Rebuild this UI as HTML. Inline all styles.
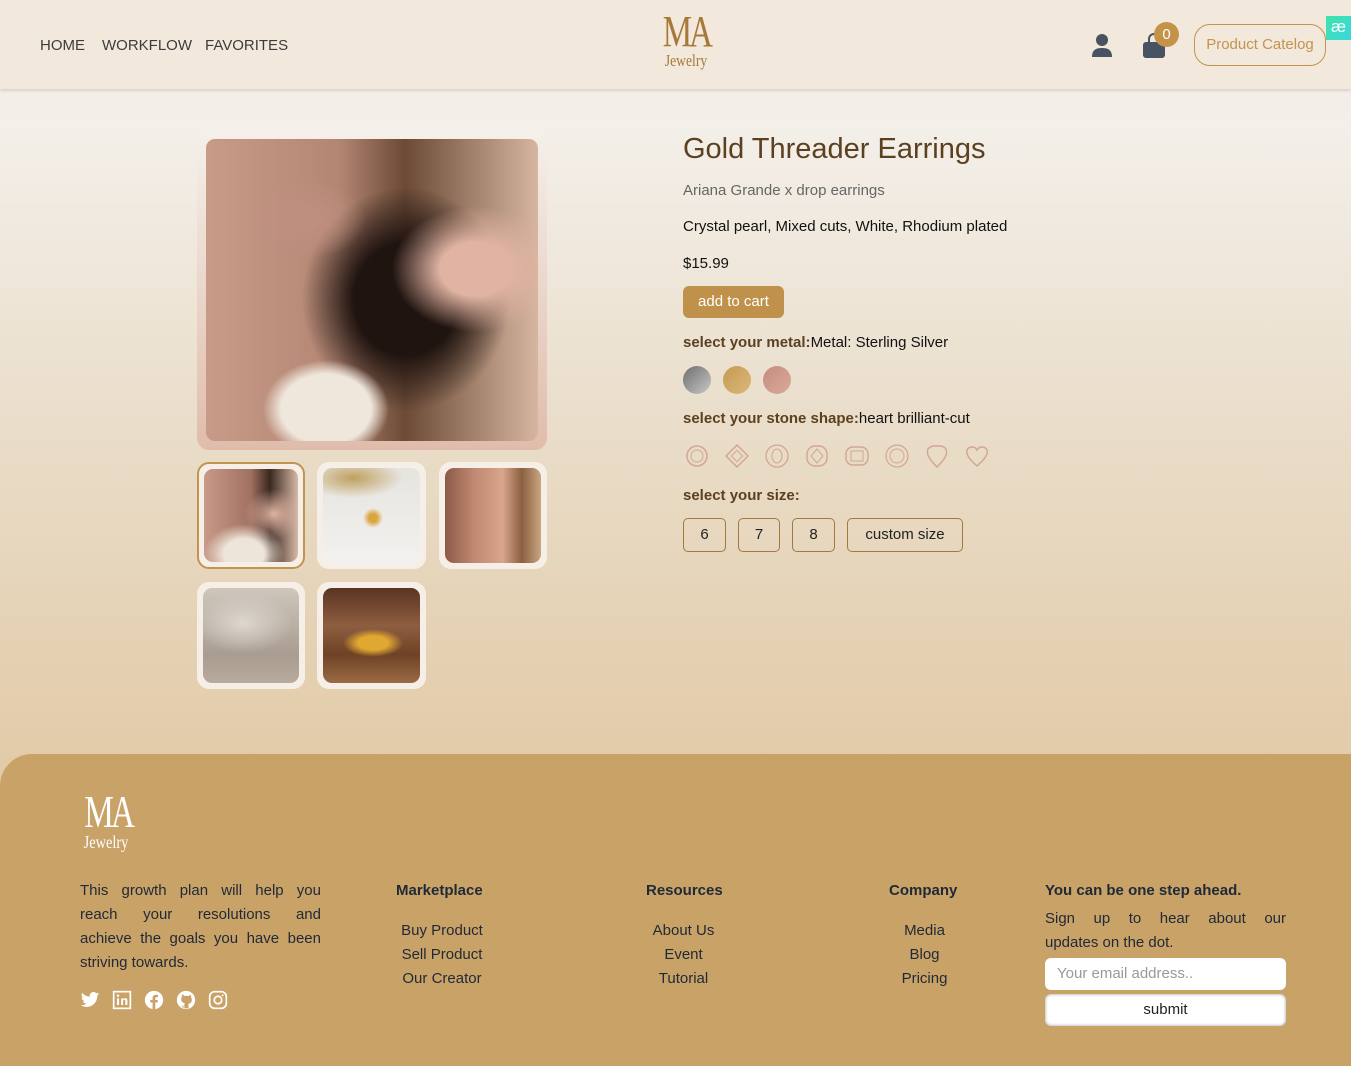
<!DOCTYPE html>
<html><head><meta charset="utf-8">
<style>
*{box-sizing:border-box;margin:0;padding:0}
body{width:1351px;height:1066px;overflow:hidden;font-family:"Liberation Sans",sans-serif;background:linear-gradient(#f3efe8 90px,#f3efe9 130px,#e9dcc7 450px,#e2cba8 760px);position:relative;color:#111}
.abs{position:absolute}
header{position:absolute;left:0;top:0;width:1351px;height:89px;background:#f2e8db;box-shadow:0 2px 3px rgba(0,0,0,.12)}
nav a{position:absolute;top:37px;font-size:15px;color:#3c3c3c;text-decoration:none}
.logo{font-family:"Liberation Serif",serif;color:#a6793a;text-align:center}
.pc{position:absolute;left:1194px;top:24px;width:132px;height:42px;border:1px solid #c39350;border-radius:16px;color:#c39350;font-size:15px;line-height:40px;text-align:center}
.ae{position:absolute;left:1326px;top:16px;width:25px;height:24px;background:linear-gradient(135deg,#3fe3a7,#3bd6e0);color:#fff;font-size:17px;text-align:center;line-height:22px}
.frame{position:absolute;border-radius:12px;padding:6px}
.img{width:100%;height:100%;border-radius:9px}
.t{position:absolute;font-size:15px}
.sw{position:absolute;top:366px;width:28px;height:28px;border-radius:50%}
.gem{position:absolute;top:444px;width:24px;height:24px}
.sz{position:absolute;top:518px;height:34px;border:1px solid #a27a3e;border-radius:5px;font-size:15px;line-height:32px;text-align:center;color:#222}
footer{position:absolute;left:0;top:754px;width:1351px;height:312px;background:#c9a267;border-top-left-radius:32px;color:#1f2937}
.fh{position:absolute;top:128px;font-size:15px;font-weight:bold;color:#1f2937}
.fl{position:absolute;font-size:15px;line-height:24px;text-align:center;color:#1f2937}
.jl{text-align:justify;text-align-last:justify;height:24px;white-space:nowrap}
.jl span{display:inline}
</style></head><body>
<header>
<nav><a style="left:40px">HOME</a><a style="left:102px">WORKFLOW</a><a style="left:205px">FAVORITES</a></nav>
<div class="logo abs" style="left:655px;top:12px;width:62px"><div style="font-size:44px;line-height:40px;letter-spacing:-4px;transform:scaleX(.75)">MA</div><div style="font-size:17px;line-height:18px;transform:scaleX(.8)">Jewelry</div></div>
<svg class="abs" style="left:1091px;top:33px" width="22" height="24" viewBox="0 0 22 24"><circle cx="11" cy="7" r="6" fill="#475262"/><path d="M1 24c0-7 4-9 10-9s10 2 10 9z" fill="#475262"/></svg>
<svg class="abs" style="left:1142px;top:33px" width="24" height="26" viewBox="0 0 24 26"><path d="M7 9V6a5 5 0 0110 0v3" stroke="#475262" stroke-width="2" fill="none"/><rect x="1" y="9" width="22" height="16" rx="3" fill="#475262"/></svg>
<div class="abs" style="left:1154px;top:22px;width:25px;height:25px;border-radius:50%;background:#c4934a;color:#fff;font-size:15px;text-align:center;line-height:25px">0</div>
<div class="pc">Product Catelog</div>
<div class="ae">æ</div>
</header>

<div class="frame" style="left:197px;top:130px;width:350px;height:320px;background:linear-gradient(#f5f0ea,#e0bcab);padding:9px">
<div class="img" style="background:radial-gradient(ellipse 60px 40px at 100px 80px,#c08f80,transparent),radial-gradient(ellipse 120px 90px at 270px 130px,#e0b3a2 30%,transparent 70%),radial-gradient(ellipse 90px 70px at 120px 270px,#efe6dc 50%,transparent 70%),radial-gradient(ellipse 130px 140px at 200px 160px,#201410 40%,transparent 80%),linear-gradient(90deg,#c89a88,#b38673 40%,#6b4a36 60%,#d6b6a0)"></div></div>

<div class="frame" style="left:197px;top:462px;width:108px;height:107px;border:2px solid #c39350;background:#f5efe8;padding:5px"><div class="img" style="background:radial-gradient(ellipse 30px 25px at 70px 45px,#e0b3a2,transparent),radial-gradient(ellipse 40px 30px at 40px 85px,#eee5da 50%,transparent),linear-gradient(90deg,#c99a88,#a07060 50%,#3a2820 70%,#d7b9a6)"></div></div>
<div class="frame" style="left:317px;top:462px;width:109px;height:107px;background:#f5efe8;padding:6px"><div class="img" style="background:radial-gradient(ellipse 50px 20px at 30px 10px,#c0a060,transparent),radial-gradient(circle 10px at 50px 50px,#d9a53c 40%,transparent),linear-gradient(#e6e4df,#f2f1ef)"></div></div>
<div class="frame" style="left:439px;top:462px;width:108px;height:107px;background:#f5efe8;padding:6px"><div class="img" style="background:linear-gradient(90deg,#8c5a48,#c08870 30%,#d9a58c 60%,#8b6040 80%,#c9a680)"></div></div>
<div class="frame" style="left:197px;top:582px;width:108px;height:107px;background:#f5efe8;padding:6px"><div class="img" style="background:radial-gradient(ellipse 50px 30px at 40px 35px,#ddd7cf,transparent),linear-gradient(#cfc7bc,#a99c90 70%,#b8aa9d)"></div></div>
<div class="frame" style="left:317px;top:582px;width:109px;height:107px;background:#f5efe8;padding:6px"><div class="img" style="background:radial-gradient(ellipse 30px 14px at 50px 55px,#e0a830 50%,transparent),linear-gradient(#5a3424,#8e5e40 40%,#6e4226 70%,#9a6a44)"></div></div>

<div class="t" style="left:683px;top:133px;font-size:29px;color:#5c4120">Gold Threader Earrings</div>
<div class="t" style="left:683px;top:182px;color:#666">Ariana Grande x drop earrings</div>
<div class="t" style="left:683px;top:218px">Crystal pearl, Mixed cuts, White, Rhodium plated</div>
<div class="t" style="left:683px;top:255px">$15.99</div>
<div class="abs" style="left:683px;top:286px;width:101px;height:32px;background:#c0914b;border-radius:6px;color:#fff;font-size:15px;text-align:center;line-height:32px">add to cart</div>
<div class="t" style="left:683px;top:334px"><b style="color:#5c4120">select your metal:</b>Metal: Sterling Silver</div>
<div class="sw" style="left:683px;background:linear-gradient(135deg,#6e6e6e,#c8c8c8)"></div>
<div class="sw" style="left:723px;background:linear-gradient(135deg,#c49a50,#dcb87a)"></div>
<div class="sw" style="left:763px;background:linear-gradient(135deg,#c58c7e,#d9aa9a)"></div>
<div class="t" style="left:683px;top:410px"><b style="color:#5c4120">select your stone shape:</b>heart brilliant-cut</div>
<svg class="gem" style="left:685px"><circle cx="12" cy="12" r="10" fill="none" stroke="#d2a596" stroke-width="1.5"/><circle cx="12" cy="12" r="6" fill="none" stroke="#d2a596"/></svg>
<svg class="gem" style="left:725px"><path d="M12 1L23 12 12 23 1 12z" fill="none" stroke="#d2a596" stroke-width="1.5"/><rect x="8" y="8" width="8" height="8" transform="rotate(45 12 12)" fill="none" stroke="#d2a596"/></svg>
<svg class="gem" style="left:765px"><circle cx="12" cy="12" r="11" fill="none" stroke="#d2a596" stroke-width="1.3"/><ellipse cx="12" cy="12" rx="5" ry="7" fill="none" stroke="#d2a596"/></svg>
<svg class="gem" style="left:805px"><rect x="2" y="2" width="20" height="20" rx="8" fill="none" stroke="#d2a596" stroke-width="1.4"/><path d="M12 5L18 12 12 19 6 12z" fill="none" stroke="#d2a596"/></svg>
<svg class="gem" style="left:845px"><rect x="1" y="3" width="22" height="18" rx="7" fill="none" stroke="#d2a596" stroke-width="1.4"/><rect x="6" y="7" width="12" height="10" fill="none" stroke="#d2a596"/></svg>
<svg class="gem" style="left:885px"><circle cx="12" cy="12" r="11" fill="none" stroke="#d2a596" stroke-width="1.2"/><circle cx="12" cy="12" r="7" fill="none" stroke="#d2a596"/></svg>
<svg class="gem" style="left:925px"><path d="M12 23C4 15 1 10 3 5 6 1 12 2 12 2s6-1 9 3c2 5-1 10-9 18z" fill="none" stroke="#d2a596" stroke-width="1.4"/></svg>
<svg class="gem" style="left:965px"><path d="M12 22C3 14 1 10 2 6 4 2 10 2 12 6 14 2 20 2 22 6 23 10 21 14 12 22z" fill="none" stroke="#d2a596" stroke-width="1.4"/></svg>
<div class="t" style="left:683px;top:487px"><b style="color:#5c4120">select your size:</b></div>
<div class="sz" style="left:683px;width:43px">6</div>
<div class="sz" style="left:738px;width:42px">7</div>
<div class="sz" style="left:792px;width:43px">8</div>
<div class="sz" style="left:847px;width:116px">custom size</div>

<footer>
<div class="abs" style="left:76px;top:38px;width:60px;color:#fff;font-family:'Liberation Serif',serif;text-align:center"><div style="font-size:46px;line-height:40px;letter-spacing:-4px;transform:scaleX(.72)">MA</div><div style="font-size:18px;line-height:20px;transform:scaleX(.8)">Jewelry</div></div>
<div class="abs" style="left:80px;top:125px;width:241px;font-size:15px;line-height:24px">
<div class="jl">This growth plan will help you</div>
<div class="jl">reach your resolutions and</div>
<div class="jl">achieve the goals you have been</div>
<div style="height:24px">striving towards.</div></div>
<div class="abs" style="left:80px;top:236px;display:flex;gap:12px">
<svg width="20" height="20" viewBox="0 0 24 24"><path fill="#fff" d="M23 4.6a9 9 0 01-2.6.7A4.5 4.5 0 0022.4 2.8a9 9 0 01-2.9 1.1A4.5 4.5 0 0011.8 8 12.8 12.8 0 012.5 3.3a4.5 4.5 0 001.4 6 4.5 4.5 0 01-2-.6 4.5 4.5 0 003.6 4.5 4.5 4.5 0 01-2 .1 4.5 4.5 0 004.2 3.1A9 9 0 011 18.3 12.8 12.8 0 007.9 20.3c8.3 0 12.8-6.9 12.8-12.8v-.6A9 9 0 0023 4.6z"/></svg>
<svg width="20" height="20" viewBox="0 0 24 24"><rect x="2" y="2" width="20" height="20" fill="none" stroke="#fff" stroke-width="2"/><rect x="6" y="10" width="2.5" height="8" fill="#fff"/><circle cx="7.2" cy="6.8" r="1.5" fill="#fff"/><path d="M11 10h2.4v1.2c.6-1 1.6-1.4 2.6-1.4 2 0 2.5 1.3 2.5 3.2V18H16v-4.5c0-1-.2-1.8-1.3-1.8s-1.4.8-1.4 1.8V18H11z" fill="#fff"/></svg>
<svg width="20" height="20" viewBox="0 0 24 24"><circle cx="12" cy="12" r="11" fill="#fff"/><path d="M13.5 23v-8h2.7l.4-3h-3.1v-2c0-.9.3-1.5 1.5-1.5h1.7V5.8a20 20 0 00-2.4-.1c-2.4 0-4 1.4-4 4.1V12H7.5v3h2.8v8z" fill="#c9a267"/></svg>
<svg width="20" height="20" viewBox="0 0 24 24"><circle cx="12" cy="12" r="11" fill="#fff"/><path d="M9 22v-3c-3 .6-3.5-1.4-3.5-1.4M15 22v-3.5c0-1 .3-1.6-.5-2 2.5-.3 4.5-1.3 4.5-5 0-1-.4-2-1-2.7.2-.5.3-1.5-.1-2.6 0 0-.9-.3-2.8 1a10 10 0 00-5 0C8.2 5 7.3 5.3 7.3 5.3c-.4 1.1-.3 2.1-.1 2.6-.6.7-1 1.7-1 2.7 0 3.7 2 4.7 4.5 5-.6.4-.7 1-.7 2V22" fill="#c9a267"/></svg>
<svg width="20" height="20" viewBox="0 0 24 24"><rect x="2" y="2" width="20" height="20" rx="6" fill="none" stroke="#fff" stroke-width="2"/><circle cx="12" cy="12" r="4.5" fill="none" stroke="#fff" stroke-width="2"/><circle cx="17.5" cy="6.5" r="1.2" fill="#fff"/></svg>
</div>
<div class="fh" style="left:396px">Marketplace</div>
<div class="fl" style="left:396px;top:165px;width:92px">Buy Product<br>Sell Product<br>Our Creator</div>
<div class="fh" style="left:646px">Resources</div>
<div class="fl" style="left:646px;top:165px;width:75px">About Us<br>Event<br>Tutorial</div>
<div class="fh" style="left:889px">Company</div>
<div class="fl" style="left:889px;top:165px;width:71px">Media<br>Blog<br>Pricing</div>
<div class="fh" style="left:1045px">You can be one step ahead.</div>
<div class="abs" style="left:1045px;top:153px;width:241px;font-size:15px;line-height:24px"><div class="jl">Sign up to hear about our</div><div>updates on the dot.</div></div>
<div class="abs" style="left:1045px;top:204px;width:241px;height:32px;background:#fff;border-radius:6px;font-size:15px;color:#999;padding:7px 12px">Your email address..</div>
<div class="abs" style="left:1045px;top:240px;width:241px;height:32px;background:#fff;border-radius:6px;font-size:15px;color:#222;text-align:center;line-height:32px;box-shadow:inset 0 0 3px #999">submit</div>
</footer>
</body></html>
